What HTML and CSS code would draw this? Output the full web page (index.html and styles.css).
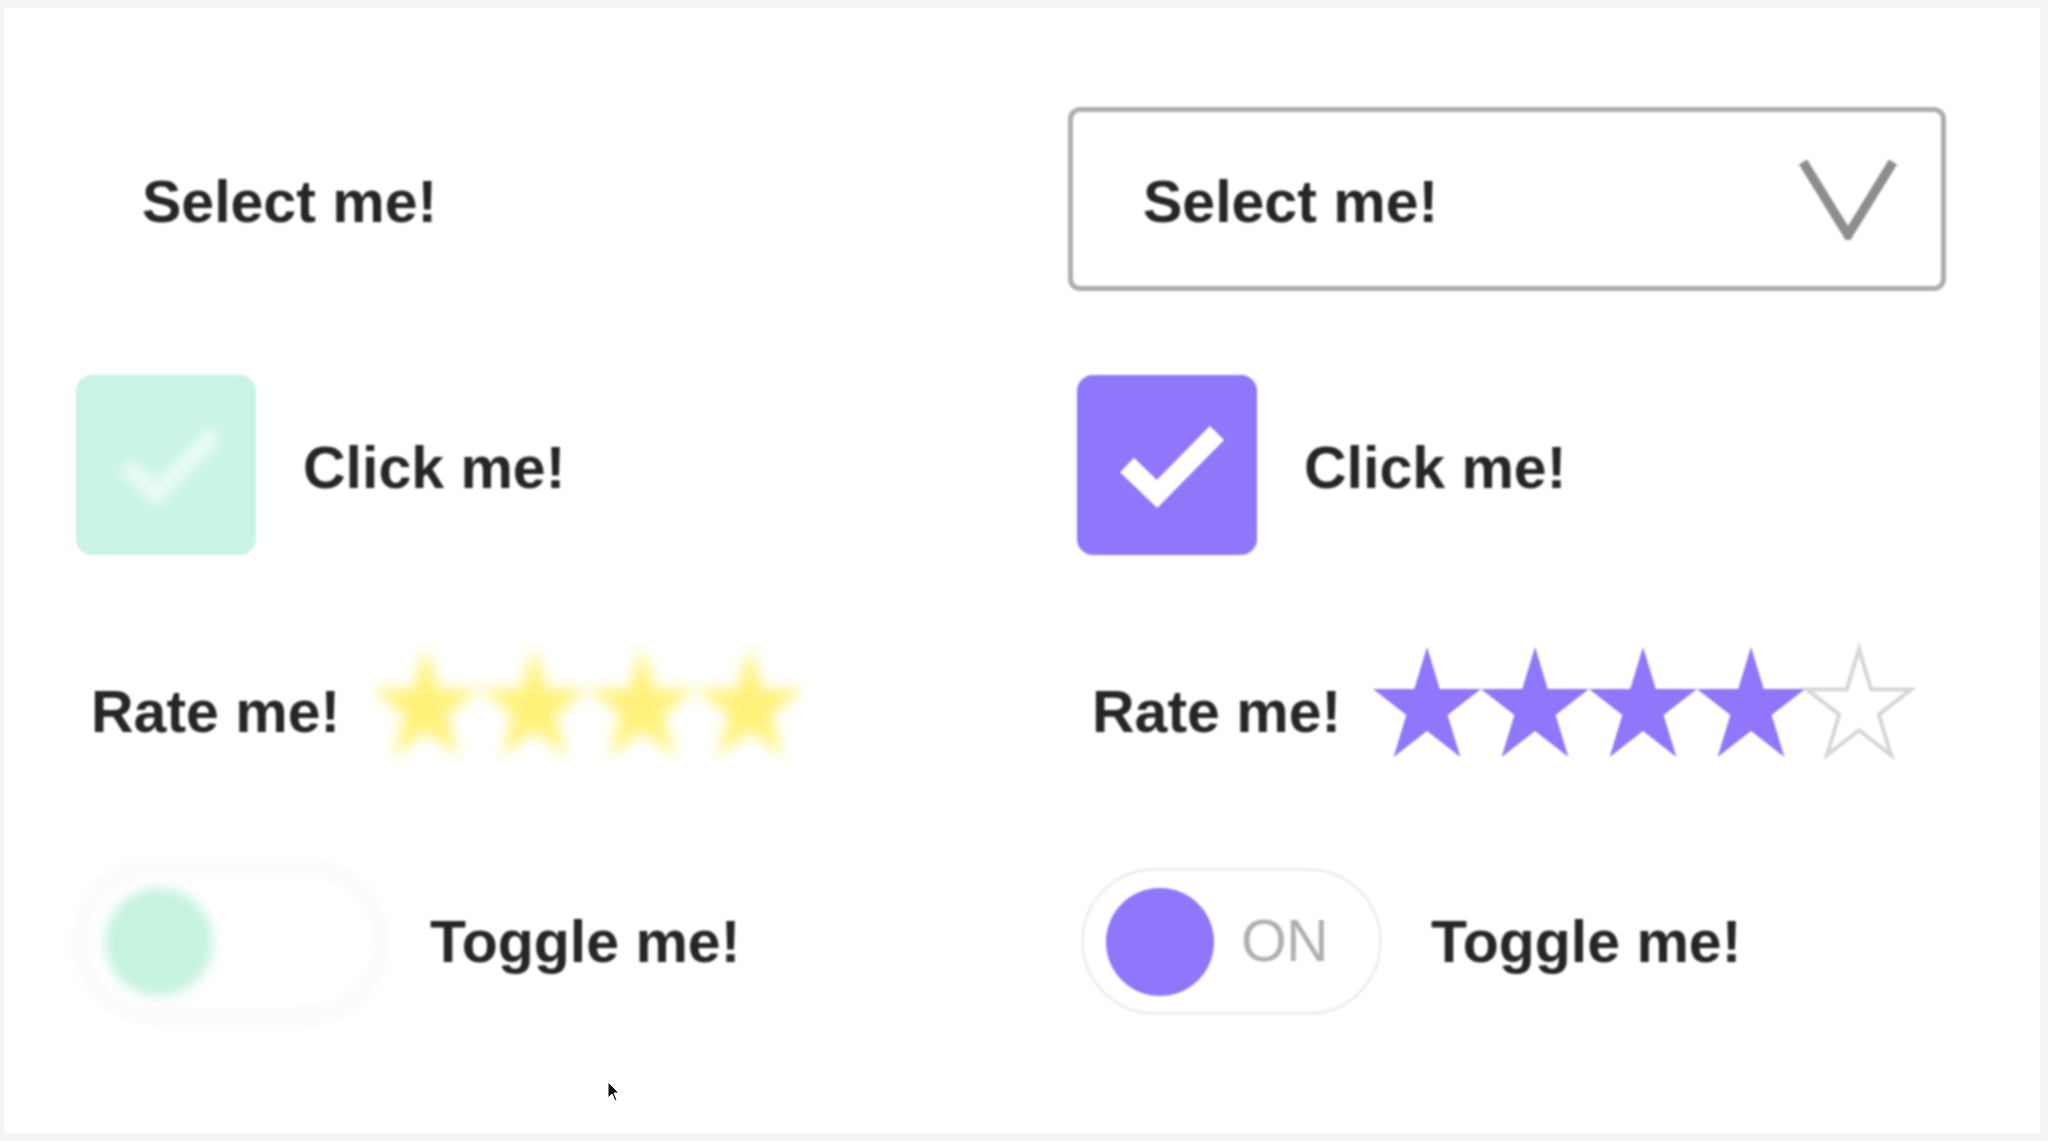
FILE: index.html
```html
<!DOCTYPE html>
<html lang="en">
<head>
<meta charset="utf-8">
<title>Controls</title>
<link rel="stylesheet" href="styles.css">
</head>
<body>
<div class="panel">
  <div class="col col-lofi">
    <div class="row row-select">
      <div class="select select-ghost"><span class="label">Select me!</span></div>
    </div>
    <div class="row row-check">
      <div class="checkbox checkbox-mint">
        <svg class="check check-faint" viewBox="0 0 180 180" width="180" height="180"><polyline points="50,90 80,119 140,58" fill="none" stroke="#ffffff" stroke-width="20"/></svg>
      </div>
      <span class="label">Click me!</span>
    </div>
    <div class="row row-rate">
      <span class="label label-rate">Rate me!</span>
      <div class="stars stars-yellow">
        <svg class="star" viewBox="0 0 108 110" width="108" height="110"><polygon points="54,0 66.75,42 108,42 74.6,68 87.4,110 54,84 20.6,110 33.4,68 0,42 41.25,42"/></svg>
        <svg class="star" viewBox="0 0 108 110" width="108" height="110"><polygon points="54,0 66.75,42 108,42 74.6,68 87.4,110 54,84 20.6,110 33.4,68 0,42 41.25,42"/></svg>
        <svg class="star" viewBox="0 0 108 110" width="108" height="110"><polygon points="54,0 66.75,42 108,42 74.6,68 87.4,110 54,84 20.6,110 33.4,68 0,42 41.25,42"/></svg>
        <svg class="star" viewBox="0 0 108 110" width="108" height="110"><polygon points="54,0 66.75,42 108,42 74.6,68 87.4,110 54,84 20.6,110 33.4,68 0,42 41.25,42"/></svg>
      </div>
    </div>
    <div class="row row-toggle">
      <div class="toggle toggle-lofi"><span class="knob knob-mint"></span></div>
      <span class="label label-toggle">Toggle me!</span>
    </div>
  </div>

  <div class="col col-hifi">
    <div class="row row-select">
      <div class="select select-box">
        <span class="label">Select me!</span>
        <svg class="chevron" viewBox="0 0 100 82" width="100" height="82"><polyline points="5,4 50,77 95,4" fill="none" stroke="#8d8d8d" stroke-width="9.5"/></svg>
      </div>
    </div>
    <div class="row row-check">
      <div class="checkbox checkbox-purple">
        <svg class="check" viewBox="0 0 180 180" width="180" height="180"><polyline points="50,90 80,119 140,58" fill="none" stroke="#ffffff" stroke-width="20"/></svg>
      </div>
      <span class="label">Click me!</span>
    </div>
    <div class="row row-rate">
      <span class="label label-rate">Rate me!</span>
      <div class="stars stars-purple">
        <svg class="star" viewBox="0 0 108 110" width="108" height="110"><polygon points="54,0 66.75,42 108,42 74.6,68 87.4,110 54,84 20.6,110 33.4,68 0,42 41.25,42"/></svg>
        <svg class="star" viewBox="0 0 108 110" width="108" height="110"><polygon points="54,0 66.75,42 108,42 74.6,68 87.4,110 54,84 20.6,110 33.4,68 0,42 41.25,42"/></svg>
        <svg class="star" viewBox="0 0 108 110" width="108" height="110"><polygon points="54,0 66.75,42 108,42 74.6,68 87.4,110 54,84 20.6,110 33.4,68 0,42 41.25,42"/></svg>
        <svg class="star" viewBox="0 0 108 110" width="108" height="110"><polygon points="54,0 66.75,42 108,42 74.6,68 87.4,110 54,84 20.6,110 33.4,68 0,42 41.25,42"/></svg>
        <svg class="star star-empty" viewBox="0 0 108 110" width="108" height="110"><polygon points="54,2 66.2,42.5 106,42.5 73.8,67.6 86,108 54,83.2 22,108 34.2,67.6 2,42.5 41.8,42.5"/></svg>
      </div>
    </div>
    <div class="row row-toggle">
      <div class="toggle toggle-on"><span class="knob knob-purple"></span><span class="on-text">ON</span></div>
      <span class="label label-toggle">Toggle me!</span>
    </div>
  </div>

  <svg class="cursor" viewBox="0 0 14 22" width="14" height="22"><path d="M1 1 L1 17 L5 13 L8 20 L10 19 L7 12 L12 12 Z" fill="#111" stroke="#fff" stroke-width="1"/></svg>
</div>
</body>
</html>
```

FILE: styles.css
```css
html, body {
  margin: 0;
  padding: 0;
  background: #f5f5f5;
}

body {
  width: 2048px;
  height: 1141px;
  overflow: hidden;
  font-family: "Liberation Sans", Arial, Helvetica, sans-serif;
}

.panel {
  position: relative;
  box-sizing: border-box;
  margin: 8px 8px 0 4px;
  width: 2036px;
  height: 1125px;
  background: #ffffff;
  display: grid;
  grid-template-columns: 1001px 1fr;
  padding: 99px 0 0 63px;
}

.col {
  display: flex;
  flex-direction: column;
  filter: blur(1.1px);
}

.row {
  display: flex;
  align-items: center;
}

.label {
  font-size: 59px;
  font-weight: 700;
  line-height: 1;
  color: #262626;
  white-space: nowrap;
}

/* select */
.row-select {
  height: 184px;
}

.select {
  box-sizing: border-box;
  width: 878px;
  height: 184px;
  border: 5px solid transparent;
  border-radius: 12px;
  display: flex;
  align-items: center;
  justify-content: space-between;
  padding: 6px 43px 0 70px;
}

.select-box {
  border-color: #aeaeae;
}

.chevron {
  display: block;
  margin-top: -6px;
}

/* checkbox */
.row-check {
  margin-top: 84px;
  height: 180px;
  gap: 47px;
}

.checkbox {
  width: 180px;
  height: 180px;
  border-radius: 16px;
  margin-left: 9px;
  flex: none;
}

.checkbox .check {
  display: block;
}

.checkbox-mint {
  background: #c9f4e3;
}

.check-faint {
  opacity: 0.6;
  filter: blur(6px);
}

.checkbox-purple {
  background: #9076fa;
}

.row-check .label {
  margin-top: 6px;
}

/* rating */
.row-rate {
  margin-top: 91px;
  height: 111px;
}

.label-rate {
  margin-left: 24px;
  margin-top: 21px;
}

.stars {
  display: flex;
  margin-left: 32px;
}

.star {
  display: block;
  flex: none;
  overflow: visible;
}

.stars-yellow .star {
  fill: #fff27a;
  filter: blur(7px);
}

.stars-purple .star {
  fill: #9076fa;
}

.stars-purple .star-empty {
  fill: none;
  stroke: #d6d6d6;
  stroke-width: 4;
}

/* toggle */
.row-toggle {
  margin-top: 111px;
  height: 147px;
}

.toggle {
  box-sizing: border-box;
  width: 301px;
  height: 147px;
  margin-left: 13px;
  border-radius: 74px;
  border: 3px solid #eeeeee;
  display: flex;
  align-items: center;
  padding-left: 22px;
  gap: 27px;
  flex: none;
}

.toggle-lofi {
  border-color: #f4f4f4;
  box-shadow: 0 0 16px rgba(0, 0, 0, 0.045);
  filter: blur(6px);
}

.knob {
  width: 108px;
  height: 108px;
  border-radius: 50%;
  flex: none;
}

.knob-mint {
  background: #c5f3e0;
}

.knob-purple {
  background: #9076fa;
}

.on-text {
  font-size: 59px;
  font-weight: 400;
  line-height: 1;
  color: #b0b0b0;
  letter-spacing: -1px;
}

.label-toggle {
  margin-left: 49px;
  margin-top: 2px;
}

/* pointer overlay */
.cursor {
  position: absolute;
  left: 603px;
  top: 1073px;
  filter: blur(0.6px);
}
```
